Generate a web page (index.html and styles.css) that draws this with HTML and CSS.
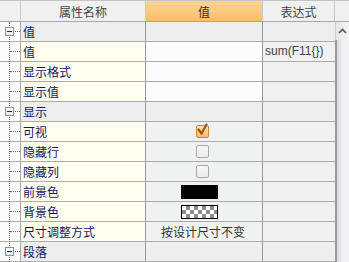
FILE: index.html
```html
<!DOCTYPE html>
<html>
<head>
<meta charset="utf-8">
<link rel="stylesheet" href="styles.css">
</head>
<body>
<div class="grid">
  <div class="head">
    <div class="h gut"></div>
    <div class="h name">属性名称</div>
    <div class="h val">值</div>
    <div class="h expr">表达式</div>
    <div class="h corner"></div>
  </div>
  <div class="body">
    <div class="rows">
      <div class="row group"><div class="gut first"><span class="box"></span></div><div class="name">值</div><div class="val"></div><div class="expr"></div></div>
      <div class="row"><div class="gut"></div><div class="name">值</div><div class="val white"></div><div class="expr">sum(F11{})</div></div>
      <div class="row"><div class="gut"></div><div class="name">显示格式</div><div class="val white"></div><div class="expr"></div></div>
      <div class="row"><div class="gut"></div><div class="name">显示值</div><div class="val white"></div><div class="expr"></div></div>
      <div class="row group"><div class="gut"><span class="box"></span></div><div class="name">显示</div><div class="val"></div><div class="expr"></div></div>
      <div class="row"><div class="gut"></div><div class="name">可视</div><div class="val"><span class="cb checked"><svg width="15" height="15" viewBox="0 0 15 15"><path d="M3.5 6.5 L6.5 10.5 L11.5 1.5" fill="none" stroke="#a4550c" stroke-width="2.2" stroke-linecap="round" stroke-linejoin="round"/></svg></span></div><div class="expr"></div></div>
      <div class="row"><div class="gut"></div><div class="name">隐藏行</div><div class="val"><span class="cb"></span></div><div class="expr"></div></div>
      <div class="row"><div class="gut"></div><div class="name">隐藏列</div><div class="val"><span class="cb"></span></div><div class="expr"></div></div>
      <div class="row"><div class="gut"></div><div class="name">前景色</div><div class="val"><span class="sw black"></span></div><div class="expr"></div></div>
      <div class="row"><div class="gut"></div><div class="name">背景色</div><div class="val"><span class="sw checker"></span></div><div class="expr"></div></div>
      <div class="row"><div class="gut"></div><div class="name">尺寸调整方式</div><div class="val text">按设计尺寸不变</div><div class="expr"></div></div>
      <div class="row group"><div class="gut"><span class="box"></span></div><div class="name">段落</div><div class="val"></div><div class="expr"></div></div>
    </div>
    <div class="scroll">
      <div class="up"><svg width="9" height="6" viewBox="0 0 9 6"><path d="M1 5 L4.5 1.5 L8 5" fill="none" stroke="#555" stroke-width="1.6"/></svg></div>
      <div class="thumb"></div>
    </div>
  </div>
</div>
</body>
</html>
```

FILE: styles.css
```css
html, body {
  margin: 0;
  padding: 0;
  background: #ffffff;
}
.grid {
  width: 349px;
  height: 262px;
  overflow: hidden;
  font-family: "Noto Sans CJK SC", "Liberation Sans", sans-serif;
  font-size: 12px;
}
.head {
  display: flex;
  height: 22px;
  box-sizing: border-box;
  border-top: 1px solid #c4c4c4;
  border-bottom: 1px solid #a6a6a6;
  background: #f0f0f0;
}
.h {
  box-sizing: border-box;
  height: 100%;
  display: flex;
  align-items: center;
  justify-content: center;
  color: #444;
  border-right: 1px solid #c8c8c8;
}
.h.gut { width: 21px; }
.h.name { width: 125px; }
.h.val {
  width: 117px;
  background: linear-gradient(#fdd496, #fbbf68);
  color: #333;
  border-right-color: #c9c9c9;
}
.h.expr { width: 72px; }
.h.corner { width: 14px; border-right: none; }

.body {
  display: flex;
  height: 240px;
}
.rows {
  width: 335px;
}
.row {
  display: flex;
  height: 20px;
  box-sizing: border-box;
  border-bottom: 1px solid #acacac;
}
.row > div {
  box-sizing: border-box;
  height: 100%;
}
.row .gut {
  width: 21px;
  position: relative;
  background: #fbfbfb;
  border-right: 1px solid #a8a8a8;
}
.row .gut::before {
  content: "";
  position: absolute;
  left: 9px;
  top: -1px;
  bottom: -1px;
  border-left: 1px dotted #6a6a6a;
}
.row .gut::after {
  content: "";
  position: absolute;
  left: 10px;
  right: 0;
  top: 9px;
  border-top: 1px dotted #6a6a6a;
}
.row .gut.first::before { top: 0; }
.box {
  position: absolute;
  left: 5px;
  top: 5px;
  width: 9px;
  height: 9px;
  box-sizing: border-box;
  border: 1px solid #8193b0;
  background: linear-gradient(#ffffff, #e4e8ee);
  z-index: 1;
}
.box::after {
  content: "";
  position: absolute;
  left: 1px;
  right: 1px;
  top: 3px;
  border-top: 1px solid #1c2a5c;
}
.row .name {
  width: 125px;
  padding-left: 2px;
  color: #15155e;
  background: #fffff0;
  border-right: 1px solid #999;
  line-height: 19px;
  white-space: nowrap;
}
.row .val {
  width: 117px;
  background: #f0f2f1;
  border-right: 1px solid #999;
  display: flex;
  align-items: center;
}
.row .val.white { background: #fcfcfc; }
.row .val.text {
  padding-left: 15px;
  color: #333;
}
.row .expr {
  width: 72px;
  background: #f1f1f1;
  color: #444;
  padding-left: 2px;
  line-height: 19px;
  white-space: nowrap;
  font-family: "Liberation Sans", "Noto Sans CJK SC", sans-serif;
}
.row.group .name,
.row.group .val,
.row.group .expr {
  background: #eeeeee;
}
.cb {
  margin-left: 50px;
  width: 13px;
  height: 13px;
  box-sizing: border-box;
  border: 1px solid #a9a9a9;
  border-radius: 2px;
  background: linear-gradient(#f6f6f6, #ececec);
  position: relative;
}
.cb.checked {
  border-color: #c8873a;
  background: linear-gradient(#fde3b8, #f9bc6c);
}
.cb svg {
  position: absolute;
  left: -2px;
  top: -3px;
}
.sw {
  margin-left: 35px;
  width: 37px;
  height: 14px;
  box-sizing: border-box;
  border: 1px solid #000;
}
.sw.black { background: #000; }
.sw.checker {
  background-color: #fff;
  background-image:
    linear-gradient(45deg, #8c8c8c 25%, transparent 25%, transparent 75%, #8c8c8c 75%),
    linear-gradient(45deg, #8c8c8c 25%, transparent 25%, transparent 75%, #8c8c8c 75%);
  background-size: 8px 8px;
  background-position: 0 0, 4px 4px;
}
.scroll {
  width: 14px;
  display: flex;
  flex-direction: column;
  background: #eceef0;
}
.up {
  height: 18px;
  display: flex;
  align-items: center;
  justify-content: center;
  background: linear-gradient(90deg, #e6e6e8, #f4f4f6);
  border-left: 1px solid #d0d0d0;
}
.thumb {
  flex: 1;
  border-left: 2px solid #9c9c9c;
  background: linear-gradient(90deg, #d8d8dc, #eef0f2 40%, #f3f3f5);
}
```
